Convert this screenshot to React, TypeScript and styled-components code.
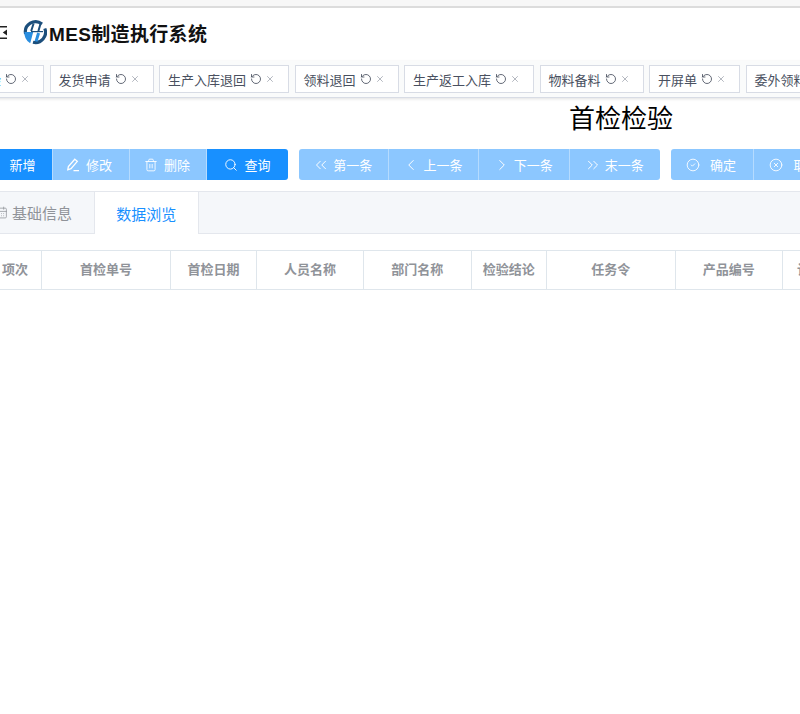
import React from "react";
import styled, { createGlobalStyle } from "styled-components";
import {
  ChevronLeft,
  ChevronRight,
  ChevronsLeft,
  ChevronsRight,
  CircleCheck,
  CircleX,
  RotateCcw,
  Search,
  Trash2,
  X,
  CalendarDays,
} from "lucide-react";

const GlobalStyle = createGlobalStyle`
  html, body {
    margin: 0;
    padding: 0;
    background: #fff;
    font-family: "Liberation Sans", "Noto Sans CJK SC", sans-serif;
  }
  #root {
    height: 714px;
    overflow: hidden;
  }
`;

const tags = [
  { name: "首检检验", active: true },
  { name: "发货申请" },
  { name: "生产入库退回" },
  { name: "领料退回" },
  { name: "生产返工入库" },
  { name: "物料备料" },
  { name: "开屏单" },
  { name: "委外领料" },
];

const columns = [
  { name: "项次", width: 53 },
  { name: "首检单号", width: 129 },
  { name: "首检日期", width: 86 },
  { name: "人员名称", width: 107 },
  { name: "部门名称", width: 107.5 },
  { name: "检验结论", width: 75.5 },
  { name: "任务令", width: 128.5 },
  { name: "产品编号", width: 107.5 },
  { name: "计划生产数量", width: 107 },
];

const EditIcon = () => (
  <svg width="14" height="14" viewBox="0 0 14 14" fill="none" stroke="currentColor" strokeWidth="1.3">
    <path d="M8.8 1.2l2.5 2.1L5 10.6l-3.2 1.2.6-3.3z" />
    <path d="M7.5 12.6h5.5" />
  </svg>
);

const Logo = () => (
  <svg width="24" height="26" viewBox="0 0 24 26">
    <path d="M2.6 15A10.2 10.2 0 0 1 19 5" fill="none" stroke="#1c4f7c" strokeWidth="3.2" />
    <path d="M21.8 9.5A10.2 10.2 0 0 1 10 23.2" fill="none" stroke="#1c4f7c" strokeWidth="3.2" />
    <path d="M1.4 13h8.8L7.2 24.2A12 12 0 0 1 1.4 13z" fill="#2a8ee0" />
    <path d="M15.6 14l-2.6 8.4" stroke="#2a8ee0" strokeWidth="3" fill="none" />
    <path d="M10.6 4.5L8.2 12M17.6 4.5L15.4 12" stroke="#1c4f7c" strokeWidth="2" fill="none" />
    <path d="M8 12.6h12" stroke="#1c4f7c" strokeWidth="1.2" />
  </svg>
);

const FoldIcon = () => (
  <svg width="19" height="13" viewBox="0 0 19 13" fill="#222">
    <path d="M0 0h18v1.5H0zM0 11.5h18v1.5H0zM0 4h11v1.3H0zM0 7.7h11v1.3H0zM18 3.6v5.8l-4.2-2.9z" />
  </svg>
);

export default function App() {
  return (
    <>
      <GlobalStyle />
      <Canvas>
        <TopStrip />
        <Header>
          <FoldBox>
            <FoldIcon />
          </FoldBox>
          <Logo />
          <Brand>MES制造执行系统</Brand>
        </Header>
        <TagBar>
          {tags.map((tag) => (
            <Tag key={tag.name}>
              <TagName $active={tag.active}>{tag.name}</TagName>
              <RotateCcw size={12} strokeWidth={1.7} />
              <TagClose>
                <X size={10} strokeWidth={1.4} />
              </TagClose>
            </Tag>
          ))}
        </TagBar>
        <Title>首检检验</Title>
        <Toolbar>
          <ButtonGroup>
            <ToolButton $primary $width={83}>
              <EmptyIcon />
              新增
            </ToolButton>
            <ToolButton $width={77} $pad={4}>
              <EditIcon />
              修改
            </ToolButton>
            <ToolButton $width={77} $pad={2}>
              <Trash2 size={14} strokeWidth={1.5} />
              删除
            </ToolButton>
            <ToolButton $primary $width={81}>
              <Search size={14} strokeWidth={1.6} />
              查询
            </ToolButton>
          </ButtonGroup>
          <ButtonGroup>
            <ToolButton $width={90.5} $gap={3} $pad={2}>
              <ChevronsLeft size={18} strokeWidth={1.3} />
              第一条
            </ToolButton>
            <ToolButton $width={90} $gap={3} $pad={2}>
              <ChevronLeft size={18} strokeWidth={1.3} />
              上一条
            </ToolButton>
            <ToolButton $width={90.5} $gap={3} $pad={2}>
              <ChevronRight size={18} strokeWidth={1.3} />
              下一条
            </ToolButton>
            <ToolButton $width={90.5} $gap={3} $pad={2}>
              <ChevronsRight size={18} strokeWidth={1.3} />
              末一条
            </ToolButton>
          </ButtonGroup>
          <ButtonGroup>
            <ToolButton $width={83} $gap={10} $pad={1}>
              <CircleCheck size={14} strokeWidth={1.5} />
              确定
            </ToolButton>
            <ToolButton $width={82} $gap={10}>
              <CircleX size={14} strokeWidth={1.5} />
              取消
            </ToolButton>
          </ButtonGroup>
        </Toolbar>
        <Tabs>
          <TabItem $width={154}>
            <CalendarDays size={13} strokeWidth={1.4} />
            基础信息
          </TabItem>
          <TabItem $active $width={104.5}>
            数据浏览
          </TabItem>
        </Tabs>
        <Table>
          {columns.map((col) => (
            <HeadCell key={col.name} $width={col.width}>
              {col.name}
            </HeadCell>
          ))}
        </Table>
      </Canvas>
    </>
  );
}

const Canvas = styled.div`
  width: 1362px;
  margin-left: -60px;
  display: flex;
  flex-direction: column;
`;

const TopStrip = styled.div`
  height: 6px;
  background: #f7f7f7;
  border-bottom: 2px solid #dcdcdc;
`;

const Header = styled.div`
  height: 53px;
  box-sizing: border-box;
  padding: 0 0 5px 49px;
  display: flex;
  align-items: center;
  background: #fff;
`;

const FoldBox = styled.div`
  width: 34px;
  display: flex;
  align-items: center;
`;

const Brand = styled.div`
  margin-left: 2px;
  font-size: 19px;
  letter-spacing: 0.35px;
  font-weight: 700;
  color: #111;
`;

const TagBar = styled.div`
  height: 36px;
  display: flex;
  align-items: center;
  gap: 5.5px;
  background: #fafbfb;
  border-bottom: 1px solid #d8dce5;
  box-shadow: 0 1px 3px rgba(0, 0, 0, 0.12);
  overflow: hidden;
`;

const Tag = styled.div`
  flex: none;
  height: 26px;
  display: flex;
  align-items: center;
  gap: 4px;
  padding: 0 12px 0 8px;
  background: #fff;
  border: 1px solid #d8dce5;
  color: #495060;
  font-size: 13px;
`;

const TagName = styled.span<{ $active?: boolean }>`
  color: ${(p) => (p.$active ? "#1890ff" : "#495060")};
`;

const TagClose = styled.span`
  display: flex;
  margin: 0 1px 0 -1px;
  color: #7d8593;
`;

const Title = styled.div`
  margin-top: 3px;
  height: 36px;
  line-height: 36px;
  text-align: center;
  font-size: 26px;
  color: #000;
`;

const Toolbar = styled.div`
  margin-top: 12px;
  display: flex;
  gap: 10.5px;
  padding-left: 30px;
`;

const ButtonGroup = styled.div`
  display: flex;
  height: 31px;
  border-radius: 3px;
  overflow: hidden;
`;

const ToolButton = styled.div<{ $primary?: boolean; $width: number; $gap?: number; $pad?: number }>`
  width: ${(p) => p.$width}px;
  display: flex;
  align-items: center;
  justify-content: center;
  gap: ${(p) => p.$gap ?? 6}px;
  padding-right: ${(p) => p.$pad ?? 0}px;
  box-sizing: border-box;
  font-size: 13px;
  color: #fff;
  background: ${(p) => (p.$primary ? "#1890ff" : "#8cc7ff")};
  border-right: 1px solid #b5dbff;
  &:last-child {
    border-right: none;
  }
`;

const EmptyIcon = styled.span`
  width: 14px;
  height: 14px;
  margin-right: 3px;
`;

const Tabs = styled.div`
  margin-top: 11px;
  height: 41px;
  display: flex;
  background: #f5f7fa;
  border-top: 1px solid #e4e7ed;
  border-bottom: 1px solid #e4e7ed;
`;

const TabItem = styled.div<{ $active?: boolean; $width: number }>`
  width: ${(p) => p.$width}px;
  box-sizing: border-box;
  height: ${(p) => (p.$active ? "42px" : "41px")};
  display: flex;
  align-items: center;
  justify-content: ${(p) => (p.$active ? "center" : "flex-end")};
  gap: 4px;
  padding-right: ${(p) => (p.$active ? "0" : "22px")};
  font-size: 15px;
  color: ${(p) => (p.$active ? "#1890ff" : "#909399")};
  background: ${(p) => (p.$active ? "#fff" : "transparent")};
  border-left: ${(p) => (p.$active ? "1px solid #e4e7ed" : "none")};
  border-right: ${(p) => (p.$active ? "1px solid #e4e7ed" : "none")};
`;

const Table = styled.div`
  margin-top: 16px;
  height: 40px;
  padding-left: 49px;
  display: flex;
  border-top: 1px solid #dfe6ec;
  border-bottom: 1px solid #dfe6ec;
  box-sizing: border-box;
  background: #fff;
`;

const HeadCell = styled.div<{ $width: number }>`
  flex: none;
  width: ${(p) => p.$width}px;
  box-sizing: border-box;
  padding-bottom: 3px;
  display: flex;
  align-items: center;
  justify-content: center;
  font-size: 13px;
  font-weight: 700;
  color: #909399;
  border-right: 1px solid #dfe6ec;
`;
